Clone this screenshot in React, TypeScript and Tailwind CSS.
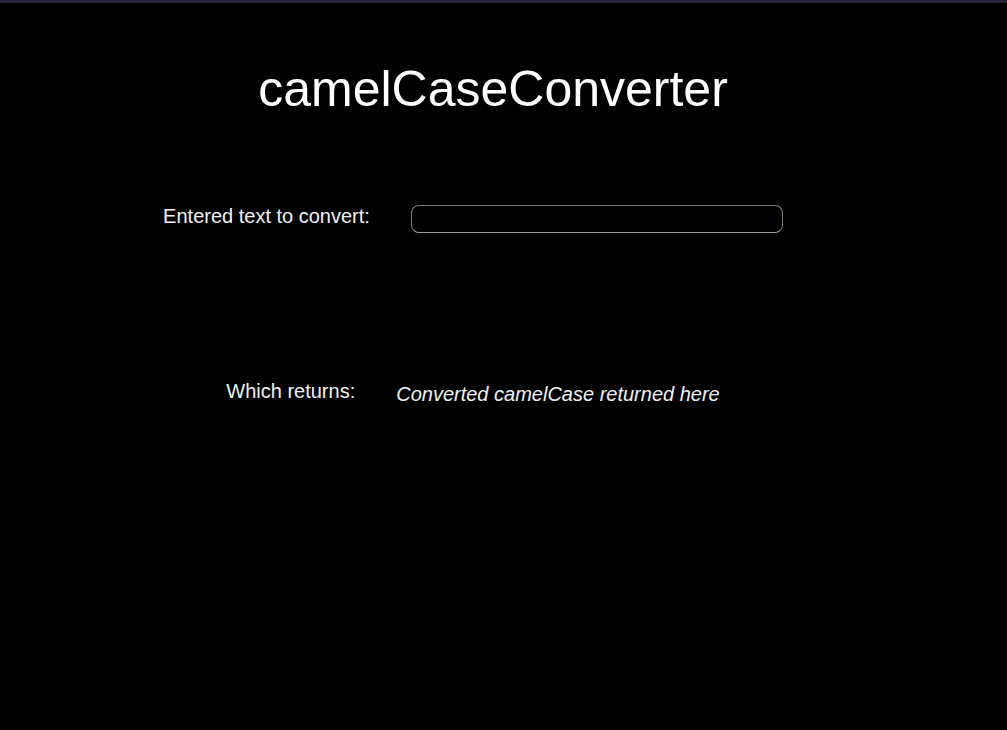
import { useState } from "react";

function toCamelCase(text: string) {
  const words = text.trim().split(/[^a-zA-Z0-9]+/).filter(Boolean);
  return words
    .map((w, i) =>
      i === 0 ? w.toLowerCase() : w.charAt(0).toUpperCase() + w.slice(1).toLowerCase()
    )
    .join("");
}

export default function App() {
  const [text, setText] = useState("");
  const result = toCamelCase(text);

  return (
    <main className="min-h-screen bg-black text-white font-['Liberation_Sans',Arial,sans-serif]">
      <div className="h-[3px] bg-[#23233a]" />

      {/* Title */}
      <div className="flex justify-center pt-[57px] pr-[21px]">
        <h1 className="text-[50px] leading-[58px]">camelCaseConverter</h1>
      </div>

      {/* Input row */}
      <div className="flex items-center justify-center pr-[61px] mt-[87px] gap-[41px]">
        <label htmlFor="src" className="text-[20px] leading-[24px] text-[#f0f0f0] -mt-[6px]">
          Entered text to convert:
        </label>
        <input
          id="src"
          type="text"
          value={text}
          onChange={(e) => setText(e.target.value)}
          className="w-[372px] h-[28px] rounded-[8px] border border-[#7a7a6a] border-b-[#9a9a9a] bg-black px-2 text-white text-[16px] focus:outline-none"
        />
      </div>

      {/* Output row */}
      <div className="flex items-start justify-center pr-[61px] mt-[146px] gap-[41px]">
        <span className="text-[20px] leading-[24px] text-[#f0f0f0]">Which returns:</span>
        <span className="text-[20px] leading-[24px] italic text-[#f0f0f0] mt-[3px]">
          {result || "Converted camelCase returned here"}
        </span>
      </div>
    </main>
  );
}
